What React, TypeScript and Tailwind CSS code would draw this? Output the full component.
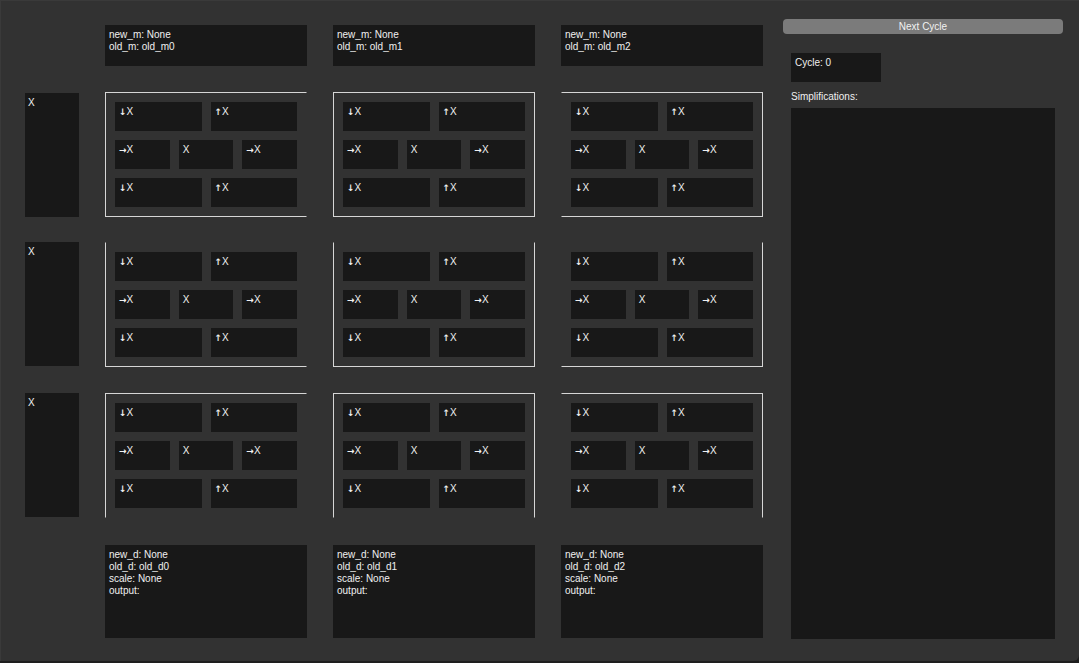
import React from "react";

const font = { fontFamily: '"Liberation Sans", Arial, sans-serif' };

// light outline per block; hidden edges are made transparent so the inset stays the same
const frameEdges: string[][] = [
  [
    "border-r-transparent",
    "",
    "border-l-transparent",
  ],
  [
    "border-t-transparent border-r-transparent",
    "border-t-transparent",
    "border-t-transparent border-l-transparent",
  ],
  [
    "border-b-transparent border-r-transparent",
    "border-b-transparent",
    "border-b-transparent border-l-transparent",
  ],
];

function Cell({ arrow, label }: { arrow?: string; label: string }) {
  return (
    <div className="h-[29px] bg-[#181818] pl-[4px] pt-[4px] text-[10px] leading-[12px] text-[#f0f0f0]">
      {arrow && (
        <span className="text-[9px] font-bold" style={{ fontFamily: '"DejaVu Sans", sans-serif' }}>
          {arrow}
        </span>
      )}
      {label}
    </div>
  );
}

function Block({ edges }: { edges: string }) {
  return (
    <div className={`flex h-[125px] flex-col gap-[9px] self-start border border-[#d6d6d6] px-[9px] pt-[9px] ${edges}`}>
      <div className="grid grid-cols-2 gap-[9px]">
        <Cell arrow="↓" label="X" />
        <Cell arrow="↑" label="X" />
      </div>
      <div className="grid grid-cols-3 gap-[9px]">
        <Cell arrow="→" label="X" />
        <Cell label="X" />
        <Cell arrow="→" label="X" />
      </div>
      <div className="grid grid-cols-2 gap-[9px]">
        <Cell arrow="↓" label="X" />
        <Cell arrow="↑" label="X" />
      </div>
    </div>
  );
}

function InfoBox({ lines, className }: { lines: string[]; className: string }) {
  return (
    <div className={`self-start bg-[#181818] pl-[4px] pt-[4px] text-[10px] leading-[12px] text-[#f0f0f0] ${className}`}>
      {lines.map((l) => (
        <div key={l}>{l}</div>
      ))}
    </div>
  );
}

export default function App() {
  const cols = [0, 1, 2];

  return (
    <div className="h-[663px] w-[1079px] bg-[#1e1e1e]" style={font}>
      <div className="flex h-[661px] rounded-br-[6px] border-t border-l border-[#3a3a3a] bg-[#323232]">
        <div className="grid grid-cols-[54px_202px_202px_202px] grid-rows-[42px_125px_126px_127px_93px] gap-x-[26px] gap-y-[25px] pl-[24px] pt-[24px]">
          <div />
          {cols.map((c) => (
            <InfoBox key={`m${c}`} className="h-[41px]" lines={["new_m: None", `old_m: old_m${c}`]} />
          ))}

          {[0, 1, 2].map((r) => (
            <React.Fragment key={`r${r}`}>
              <div className={`h-[124px] self-start bg-[#181818] pl-[3px] pt-[4px] text-[10px] leading-[12px] text-[#f0f0f0] ${r === 0 ? "mt-[1px]" : ""}`}>
                X
              </div>
              {cols.map((c) => (
                <Block key={`b${r}${c}`} edges={frameEdges[r][c]} />
              ))}
            </React.Fragment>
          ))}

          <div />
          {cols.map((c) => (
            <InfoBox
              key={`d${c}`}
              className="h-[93px]"
              lines={["new_d: None", `old_d: old_d${c}`, "scale: None", "output:"]}
            />
          ))}
        </div>

        <div className="ml-[20px] flex w-[280px] flex-col pt-[18px]">
          <button className="h-[15px] rounded-[4px] bg-[#7b7b7b] text-[10px] leading-[15px] text-[#f2f2f2]">
            Next Cycle
          </button>
          <div className="mx-[8px] mt-[19px] h-[29px] w-[90px] bg-[#181818] pl-[4px] pt-[4px] text-[10px] leading-[12px] text-[#f0f0f0]">
            Cycle: 0
          </div>
          <div className="mx-[8px] mt-[9px] text-[10px] leading-[12px] text-[#f0f0f0]">
            Simplifications:
          </div>
          <div className="mx-[8px] mt-[5px] h-[531px] bg-[#181818]" />
        </div>
      </div>
    </div>
  );
}
